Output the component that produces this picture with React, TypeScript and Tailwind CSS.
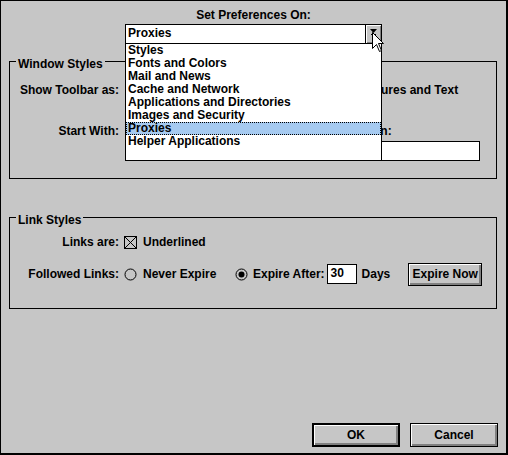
import React from 'react';

const ITEMS = [
  'Styles',
  'Fonts and Colors',
  'Mail and News',
  'Cache and Network',
  'Applications and Directories',
  'Images and Security',
  'Proxies',
  'Helper Applications',
];

function Radio({ on }: { on?: boolean }) {
  return (
    <svg width="13" height="13" viewBox="0 0 13 13" className="shrink-0">
      <circle cx="6.5" cy="6.5" r="5.5" fill="none" stroke="#000" strokeWidth="1" />
      {on && <circle cx="6.5" cy="6.5" r="3" fill="#000" />}
    </svg>
  );
}

function Check() {
  return (
    <svg width="13" height="13" viewBox="0 0 13 13" className="shrink-0">
      <rect x="0.5" y="0.5" width="12" height="12" fill="none" stroke="#000" />
      <path d="M1 1L12 12M12 1L1 12" stroke="#000" strokeWidth="1" />
    </svg>
  );
}

function Btn({ label, def, w, h }: { label: string; def?: boolean; w: string; h: string }) {
  return (
    <div
      className={`${w} ${h} ${def ? 'border-2' : 'border'} border-black bg-[#c6c6c6] flex items-center justify-center shadow-[inset_1px_1px_0_#fff,inset_-2px_-2px_0_#808080]`}
    >
      {label}
    </div>
  );
}

function Group({ title, h, className, children }: { title: string; h: string; className?: string; children: React.ReactNode }) {
  return (
    <div className={`relative ml-[8px] w-[488px] ${h} border border-black ${className ?? ''}`}>
      <span className="absolute left-[6px] top-[-5px] px-[2px] bg-[#c6c6c6]">{title}</span>
      {children}
    </div>
  );
}

export default function App() {
  return (
    <div className="w-[508px] h-[455px] box-border bg-[#c6c6c6] border-t border-l border-r-2 border-b-2 border-black flex flex-col font-['Liberation_Sans',Arial,sans-serif] font-bold text-[12px] leading-[14px] text-black relative overflow-hidden">
      <div className="pt-[7px] text-center">Set Preferences On:</div>

      {/* combo box with its list dropped open */}
      <div className="relative z-10 mt-[2px] ml-[124px] w-[257px] h-[20px] box-border border border-black bg-white flex">
        <div className="flex-1 pl-[2px] leading-[16px]">Proxies</div>
        <div className="w-[16px] h-full border-l border-black bg-[#c6c6c6] shadow-[inset_1px_1px_0_#fff,inset_-1px_-1px_0_#808080] flex justify-center pt-[4px]">
          <svg width="7" height="6" viewBox="0 0 7 6">
            <path d="M0 0H7L3.5 4Z" fill="#000" />
            <rect x="1" y="5" width="5" height="1" fill="#000" />
          </svg>
        </div>
        <div className="absolute left-[-1px] top-[19px] w-[257px] h-[117px] box-border border-l border-r border-b border-black bg-white">
          {ITEMS.map((it) =>
            it === 'Proxies' ? (
              <div key={it} className="h-[13px] box-border pl-[1px] leading-[11px] bg-[#a6caf0] border border-dotted border-black">
                {it}
              </div>
            ) : (
              <div key={it} className="h-[13px] pl-[2px] leading-[13px]">
                {it}
              </div>
            )
          )}
        </div>
      </div>

      {/* mouse pointer */}
      <svg className="absolute left-[371px] top-[31px] z-20" width="13" height="21" viewBox="0 0 13 21">
        <path d="M0.5 0.5V16.5L4.5 12.5L7.5 19.5L9.5 18.5L6.5 11.5H11.5Z" fill="#fff" stroke="#000" strokeWidth="1" />
      </svg>

      <Group title="Window Styles" h="h-[118px]" className="mt-[17px]">
        <div className="pt-[21px]">
          {/* the options left of x=381 lie under the open list */}
          <div className="flex items-center h-[14px]">
            <div className="w-[109px] text-right">Show Toolbar as:</div>
            <div className="ml-[221px] flex items-center gap-[6px]">
              <Radio />
              <span>Pictures and Text</span>
            </div>
          </div>
          <div className="mt-[27px] flex items-center h-[14px]">
            <div className="w-[109px] text-right">Start With:</div>
            <div className="ml-[131px] flex items-center gap-[6px]">
              <Radio on />
              <span>Home Page Location:</span>
            </div>
          </div>
          <div className="mt-[3px] ml-[259px] w-[211px] h-[20px] border border-black bg-white" />
        </div>
      </Group>

      <Group title="Link Styles" h="h-[92px]" className="mt-[38px]">
        <div className="pt-[17px]">
          <div className="flex items-center h-[14px]">
            <div className="w-[109px] text-right">Links are:</div>
            <div className="ml-[5px] flex items-center gap-[6px]">
              <Check />
              <span>Underlined</span>
            </div>
          </div>
          <div className="mt-[18px] flex items-center h-[14px]">
            <div className="w-[109px] text-right">Followed Links:</div>
            <div className="ml-[5px] w-[111px] flex items-center gap-[6px]">
              <Radio />
              <span>Never Expire</span>
            </div>
            <div className="flex items-center gap-[5px]">
              <Radio on />
              <span>Expire After:</span>
            </div>
            <div className="ml-[2px] w-[30px] h-[20px] border border-black bg-white pl-[3px] leading-[16px]">30</div>
            <span className="ml-[5px]">Days</span>
            <div className="ml-[18px]">
              <Btn label="Expire Now" w="w-[74px]" h="h-[23px]" />
            </div>
          </div>
        </div>
      </Group>

      <div className="mt-[114px] pr-[8px] flex justify-end gap-[10px]">
        <Btn label="OK" def w="w-[88px]" h="h-[24px]" />
        <Btn label="Cancel" w="w-[88px]" h="h-[24px]" />
      </div>
    </div>
  );
}
